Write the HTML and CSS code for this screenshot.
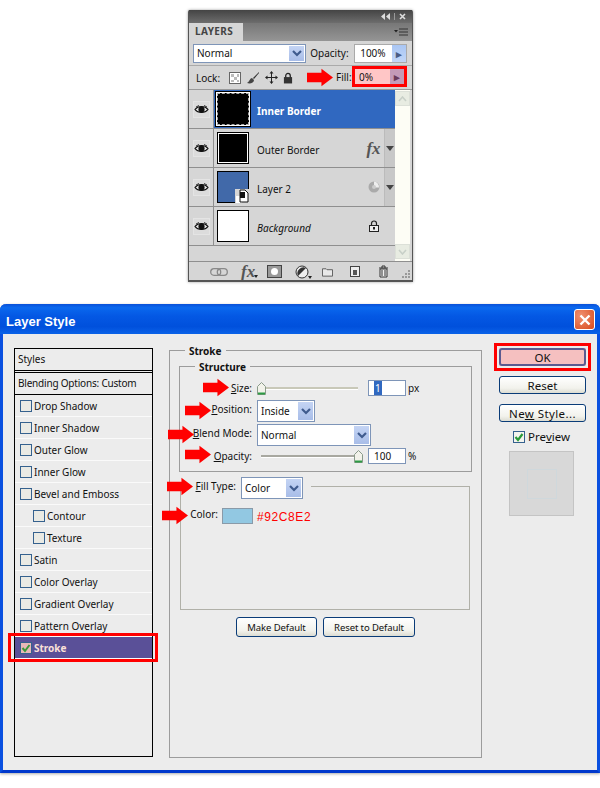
FILE: index.html
```html
<!DOCTYPE html>
<html lang="en">
<head>
<meta charset="utf-8">
<title>Layer Style</title>
<link rel="stylesheet" href="styles.css">
</head>
<body>
<svg class="defs" width="0" height="0">
  <defs>
    <symbol id="arrow" viewBox="0 0 27 18"><path d="M0 4h15V0l12 9-12 9v-4H0z" fill="#f00"/></symbol>
    <symbol id="eye" viewBox="0 0 15 15"><path d="M1 7.500C4 3.500 11 3.500 14 7.500 11 11.500 4 11.500 1 7.500z" fill="#e8e8e8" stroke="#111" stroke-width="1.200"/><circle cx="7.500" cy="7.500" r="3.100" fill="#111"/><path d="M2 5 5 3.500M13 5 10 3.500" stroke="#333"/></symbol>
    <symbol id="chev" viewBox="0 0 10 7"><path d="M1 1l4 4 4-4" fill="none" stroke="#3f5b8e" stroke-width="2.200"/></symbol>
    <symbol id="thumb" viewBox="0 0 9 13"><path d="M.5 4.500 4.500.5l4 4v8h-8z" fill="#f2f2ea" stroke="#8a9a8a"/><path d="M1 10.500h7v2H1z" fill="#2c9a44"/></symbol>
  </defs>
</svg>

<section class="panel">
  <div class="panel-top">
    <svg class="panel-collapse" width="9" height="7" viewBox="0 0 9 7"><path d="M4 0v7L0 3.500zM9 0v7L5 3.500z" fill="#ddd"/></svg>
    <span class="panel-sep"></span>
    <svg width="7" height="7" viewBox="0 0 7 7"><path d="M1 1l5 5M6 1 1 6" stroke="#ddd" stroke-width="1.600"/></svg>
  </div>
  <div class="tabs">
    <div class="tab">LAYERS</div>
    <svg class="tab-menu" width="14" height="8" viewBox="0 0 14 8"><path d="M0 2h4L2 4.500z" fill="#222"/><path d="M5 1h9M5 4h9M5 7h9" stroke="#333"/></svg>
  </div>
  <div class="opts">
    <div class="sel layer-blend"><span>Normal</span><b class="sel-btn"><svg width="10" height="7"><use href="#chev"/></svg></b></div>
    <span class="opts-label">Opacity:</span>
    <div class="stepper"><span>100%</span><b>&#9656;</b></div>
  </div>
  <div class="lockrow">
    <span class="lock-label">Lock:</span>
    <svg class="lock-ico" width="12" height="12" viewBox="0 0 12 12"><rect x=".5" y=".5" width="11" height="11" fill="#fff" stroke="#666"/><path d="M2 2h3v3H2zM5 5h3v3H5zM8 2h2v3H8zM2 8h3v2H2zM8 8h2v2H8z" fill="#bbb"/></svg>
    <svg class="lock-ico" width="14" height="14" viewBox="0 0 14 14"><path d="M13 1 7 7l1 1 5-6z" fill="#333"/><path d="M6 7c-2 0-2 3-5 5 3 1 7 0 7-3z" fill="#444"/></svg>
    <svg class="lock-ico" width="13" height="13" viewBox="0 0 13 13"><path d="M6.500 1v11M1 6.500h11" stroke="#222"/><path d="M6.500 0l2 2.500h-4zM6.500 13l2-2.500h-4zM0 6.500l2.500-2v4zM13 6.500l-2.500-2v4z" fill="#222"/></svg>
    <svg class="lock-ico" width="10" height="12" viewBox="0 0 11 12"><path d="M3 6V3.500a2.500 2.500 0 0 1 5 0V6" fill="none" stroke="#222" stroke-width="1.400"/><rect x="1" y="5" width="9" height="7" fill="#333"/></svg>
    <svg class="panel-arrow"><use href="#arrow"/></svg>
    <span class="fill-label">Fill:</span>
    <div class="stepper fill-step"><span>0%</span><b>&#9656;</b></div>
  </div>
  <div class="layers-area">
    <div class="layer-list">
      <div class="layer active">
        <div class="eye-col"><svg class="eye" width="15" height="15"><use href="#eye"/></svg></div>
        <div class="thumb thumb-dash"></div>
        <div class="lname lname-active">Inner Border</div>
      </div>
      <div class="layer">
        <div class="eye-col"><svg class="eye" width="15" height="15"><use href="#eye"/></svg></div>
        <div class="thumb thumb-black"></div>
        <div class="lname">Outer Border</div>
        <div class="lflag fx">fx</div>
        <div class="expand"><i></i></div>
      </div>
      <div class="layer">
        <div class="eye-col"><svg class="eye" width="15" height="15"><use href="#eye"/></svg></div>
        <div class="thumb thumb-blue">
          <svg class="smart" width="14" height="14" viewBox="0 0 14 14"><rect width="14" height="14" fill="#d6d6d6"/><rect x="1" y="7" width="6" height="7" fill="#fff"/><path d="M5 1h5l3 3v9H5z" fill="#fff" stroke="#111"/><rect x="5" y="3" width="5" height="6" fill="#111"/></svg>
        </div>
        <div class="lname">Layer 2</div>
        <div class="lflag"><svg width="12" height="12" viewBox="0 0 12 12"><circle cx="6" cy="6" r="5.500" fill="#aaa"/><path d="M6 .5a5.500 5.500 0 0 1 5 6H6z" fill="#eee"/><circle cx="6" cy="6" r="2" fill="#ccc"/></svg></div>
        <div class="expand"><i></i></div>
      </div>
      <div class="layer">
        <div class="eye-col"><svg class="eye" width="15" height="15"><use href="#eye"/></svg></div>
        <div class="thumb"></div>
        <div class="lname lname-bg">Background</div>
        <div class="lflag lflag-lock"><svg width="10" height="12" viewBox="0 0 10 12"><path d="M2.500 6V3.500a2.500 2.500 0 0 1 5 0V6" fill="none" stroke="#222" stroke-width="1.200"/><rect x=".5" y="5.500" width="9" height="6" fill="#eee" stroke="#222"/><rect x="4" y="7" width="2" height="2.500" fill="#222"/></svg></div>
      </div>
    </div>
    <div class="scroll">
      <div class="scroll-btn"><svg width="9" height="6" viewBox="0 0 9 6"><path d="M1 5l3.500-4L8 5" fill="none" stroke="#c8d0c8" stroke-width="1.600"/></svg></div>
      <div class="scroll-btn"><svg width="9" height="6" viewBox="0 0 9 6"><path d="M1 1l3.500 4L8 1" fill="none" stroke="#c8d0c8" stroke-width="1.600"/></svg></div>
    </div>
  </div>
  <div class="panel-foot">
    <svg class="f-link" width="18" height="8" viewBox="0 0 18 8"><rect x=".7" y=".7" width="10" height="6.600" rx="3.300" fill="none" stroke="#888" stroke-width="1.300"/><rect x="7.300" y=".7" width="10" height="6.600" rx="3.300" fill="none" stroke="#888" stroke-width="1.300"/></svg>
    <span class="foot-fx">fx<i class="mini"></i></span>
    <svg class="f-mask" width="15" height="13" viewBox="0 0 15 13"><rect x=".5" y=".5" width="14" height="12" fill="#999" stroke="#444"/><circle cx="7.500" cy="6.500" r="3.500" fill="#fff"/></svg>
    <span class="f-adj"><svg width="14" height="14" viewBox="0 0 14 14"><circle cx="7" cy="7" r="6" fill="#eee" stroke="#333"/><path d="M11 3 3 11A6 6 0 0 1 11 3z" fill="#333"/></svg><i class="mini"></i></span>
    <svg class="f-folder" width="11" height="10" viewBox="0 0 12 10"><path d="M.5 1.500h4l1 1h6v7H.5z" fill="#e8e8e8" stroke="#555"/></svg>
    <svg class="f-new" width="10" height="11" viewBox="0 0 10 11"><rect x=".5" y=".5" width="9" height="10" fill="#eee" stroke="#444"/><rect x="3" y="4" width="4" height="5" fill="#555"/></svg>
    <svg class="f-trash" width="11" height="13" viewBox="0 0 11 13"><path d="M1 3h9M4 3V1h3v2" fill="none" stroke="#333"/><path d="M2 4h7v8H2z" fill="#eee" stroke="#333"/><path d="M4 5v6M7 5v6" stroke="#333"/></svg>
    <svg class="f-grip" width="10" height="10" viewBox="0 0 10 10"><path d="M8 0h2v2H8zM5 3h2v2H5zM8 3h2v2H8zM2 6h2v2H2zM5 6h2v2H5zM8 6h2v2H8z" fill="#999"/></svg>
  </div>
</section>

<section class="dialog">
  <header class="titlebar">
    <span class="title">Layer Style</span>
    <span class="close"><svg width="12" height="12" viewBox="0 0 12 12"><path d="M1.500 1.500l9 9M10.500 1.500l-9 9" stroke="#fff" stroke-width="2.400"/></svg></span>
  </header>
  <div class="dlg-body">
    <aside class="stylelist">
      <div class="sl-head">Styles</div>
      <div class="sl-blend">Blending Options: Custom</div>
      <div class="sl-row"><i class="cb"></i>Drop Shadow</div>
      <div class="sl-row"><i class="cb"></i>Inner Shadow</div>
      <div class="sl-row"><i class="cb"></i>Outer Glow</div>
      <div class="sl-row"><i class="cb"></i>Inner Glow</div>
      <div class="sl-row"><i class="cb"></i>Bevel and Emboss</div>
      <div class="sl-row sl-sub"><i class="cb"></i>Contour</div>
      <div class="sl-row sl-sub"><i class="cb"></i>Texture</div>
      <div class="sl-row"><i class="cb"></i>Satin</div>
      <div class="sl-row"><i class="cb"></i>Color Overlay</div>
      <div class="sl-row"><i class="cb"></i>Gradient Overlay</div>
      <div class="sl-row"><i class="cb"></i>Pattern Overlay</div>
      <div class="sl-row sl-on">
        <i class="cb cb-on"><svg width="10" height="10" viewBox="0 0 10 10"><path d="M1.500 5l2.500 3 4.500-6" fill="none" stroke="#3a9a3a" stroke-width="2"/></svg></i>Stroke
        <span class="red-frame"></span>
      </div>
    </aside>

    <main class="stroke-group">
      <span class="legend legend-stroke">Stroke</span>
      <div class="structure">
        <span class="legend legend-structure">Structure</span>
        <div class="frow frow-size">
          <svg class="ar"><use href="#arrow"/></svg>
          <label class="flabel"><u>S</u>ize:</label>
          <div class="slider"><svg class="th" width="9" height="13"><use href="#thumb"/></svg><span class="track track-size"></span></div>
          <div class="numbox"><span class="sel-text">1</span></div>
          <span class="unit">px</span>
        </div>
        <div class="frow frow-pos">
          <svg class="ar"><use href="#arrow"/></svg>
          <label class="flabel flabel-up"><u>P</u>osition:</label>
          <div class="sel sel-pos"><span>Inside</span><b class="sel-btn"><svg width="10" height="7"><use href="#chev"/></svg></b></div>
        </div>
        <div class="frow frow-pos">
          <svg class="ar"><use href="#arrow"/></svg>
          <label class="flabel flabel-up"><u>B</u>lend Mode:</label>
          <div class="sel sel-blend"><span>Normal</span><b class="sel-btn"><svg width="10" height="7"><use href="#chev"/></svg></b></div>
        </div>
        <div class="frow frow-op">
          <svg class="ar"><use href="#arrow"/></svg>
          <label class="flabel"><u>O</u>pacity:</label>
          <div class="slider slider-end"><span class="track track-op"></span><svg class="th" width="9" height="13"><use href="#thumb"/></svg></div>
          <div class="numbox numbox-c">100</div>
          <span class="unit">%</span>
        </div>
      </div>
      <div class="fillrow">
        <svg class="ar"><use href="#arrow"/></svg>
        <label class="flabel flabel-fill flabel-up"><u>F</u>ill Type:</label>
        <div class="sel sel-fill"><span>Color</span><b class="sel-btn"><svg width="10" height="7"><use href="#chev"/></svg></b></div>
      </div>
      <div class="fillbox">
        <div class="colorrow">
          <svg class="ar"><use href="#arrow"/></svg>
          <label class="flabel flabel-color flabel-up">Color:</label>
          <span class="swatch"></span>
          <span class="hex">#92C8E2</span>
        </div>
      </div>
      <div class="defaults">
        <button class="btn btn-make">Make Default</button>
        <button class="btn btn-reset">Reset to Default</button>
      </div>
    </main>

    <aside class="actions">
      <span class="ok-frame"><button class="btn btn-act btn-ok">OK</button></span>
      <button class="btn btn-act">Reset</button>
      <button class="btn btn-act btn-new">Ne<u>w</u> Style...</button>
      <div class="preview-check"><i class="cb cb-prev"><svg width="10" height="10" viewBox="0 0 10 10"><path d="M1.500 5l2.500 3 4.500-6" fill="none" stroke="#2a9a3a" stroke-width="2.200"/></svg></i>Pre<u>v</u>iew</div>
      <div class="preview"><span></span></div>
    </aside>
  </div>
</section>
</body>
</html>
```
FILE: styles.css
```css
* { box-sizing: border-box; }
html, body { margin: 0; padding: 0; background: #fff; }
body {
  width: 600px;
  height: 788px;
  overflow: hidden;
  font-family: "Noto Sans", sans-serif;
  font-size: 10px;
  color: #111;
  padding-top: 10px;
}
.defs { position: absolute; }
button { font: inherit; color: inherit; }

/* Layers panel */
.panel {
  width: 225px;
  height: 272px;
  margin-left: 188px;
  border: 1px solid #555;
  border-top: 0;
  border-radius: 2px 2px 0 0;
  background: #d6d6d6;
  box-shadow: 0 0 3px #999;
  display: flex;
  flex-direction: column;
}
.panel-top {
  height: 13px;
  background: linear-gradient(#444, #6d6d6d);
  display: flex;
  align-items: center;
  justify-content: flex-end;
  gap: 3px;
  padding-right: 6px;
  flex: none;
}
.panel-sep { width: 1px; height: 7px; background: #999; margin: 0 1px; }
.tabs {
  height: 18px;
  background: linear-gradient(#777, #959595);
  display: flex;
  justify-content: space-between;
  align-items: center;
  padding-right: 4px;
  flex: none;
}
.tab {
  width: 54px;
  height: 18px;
  background: #d6d6d6;
  font-weight: bold;
  letter-spacing: .4px;
  line-height: 17px;
  color: #444;
  padding-left: 6px;
}
.opts {
  height: 25px;
  display: flex;
  align-items: center;
  padding: 0 5px 0 4px;
  border-bottom: 1px solid #aaa;
  flex: none;
}
.sel {
  background: #fff;
  border: 1px solid #7e95b8;
  display: flex;
  align-items: center;
  justify-content: space-between;
  padding-left: 3px;
  box-shadow: inset 0 0 0 1px #fff;
}
.sel-btn {
  width: 15px;
  align-self: stretch;
  margin: 1px;
  background: linear-gradient(#c4d4f4, #a8bde8);
  display: flex;
  align-items: center;
  justify-content: center;
}
.layer-blend { width: 116px; height: 19px; }
.opts-label { margin-left: 4px; width: 42px; }
.stepper {
  width: 54px;
  height: 19px;
  background: #fff;
  border: 1px solid #aaa;
  display: flex;
  align-items: center;
  justify-content: space-between;
  padding-left: 5px;
  margin-left: 3px;
}
.stepper b {
  width: 14px;
  align-self: stretch;
  background: linear-gradient(#a9c6f4, #c2d6f7);
  color: #4a5c84;
  font-size: 11px;
  text-align: center;
  line-height: 17px;
}
.lockrow {
  height: 24px;
  display: flex;
  align-items: center;
  padding: 0 5px 0 7px;
  border-bottom: 1px solid #999;
  position: relative;
  flex: none;
}
.lock-label { width: 33px; }
.lock-ico { margin-right: 5px; flex: none; }
.panel-arrow { position: absolute; left: 118px; top: 2px; width: 26px; height: 19px; }
.fill-label { position: absolute; left: 147px; top: 4px; }
.fill-step {
  position: absolute;
  left: 163px;
  top: 0;
  width: 55px;
  height: 21px;
  border: 3px solid #f00;
  background: #ffc6c6;
  margin: 0;
  padding-left: 4px;
}
.fill-step b { background: #c49ab8; line-height: 15px; color: #6a3a5a; }
.layers-area { display: flex; height: 171px; flex: none; }
.layer-list { width: 206px; }
.layer {
  height: 39px;
  display: flex;
  align-items: center;
  border-bottom: 1px solid #8f8f8f;
  position: relative;
}
.eye-col {
  width: 25px;
  height: 100%;
  border-right: 1px solid #8f8f8f;
  display: flex;
  align-items: center;
  justify-content: center;
  flex: none;
}
.eye { background: #dcdcdc; outline: 1px solid #e4e4e4; }
.thumb {
  width: 32px;
  height: 32px;
  margin-left: 3px;
  border: 1px solid #000;
  background: #fff;
  flex: none;
  position: relative;
}
.thumb-black { background: #000; box-shadow: inset 0 0 0 1px #fff; }
.thumb-dash { background: #000; border: 1px dashed #aaa; box-shadow: 0 0 0 1px #fff, 0 0 0 2px #000; }
.thumb-blue { background: #4169a9; }
.smart { position: absolute; right: -1px; bottom: -1px; }
.active { background: linear-gradient(90deg, #d6d6d6 25px, #3068c0 25px); }
.lname {
  margin: 3px 0 0 8px;
  flex: 1;
}
.lname-active { font-weight: bold; color: #fff; }
.lname-bg { font-style: italic; }
.lflag { width: 21px; text-align: center; flex: none; line-height: 0; }
.lflag-lock { margin-right: 11px; }
.fx {
  font: italic bold 17px/15px "Liberation Serif", serif;
  color: #555;
}
.expand {
  width: 11px;
  height: 100%;
  background: #c8c8c8;
  border-left: 1px solid #bbb;
  display: flex;
  align-items: center;
  justify-content: center;
  flex: none;
}
.expand i { border: 4px solid transparent; border-top: 5px solid #444; border-bottom: 0; }
.scroll {
  width: 15px;
  background: #fdfdf5;
  display: flex;
  flex-direction: column;
  justify-content: space-between;
  padding: 1px 0 2px;
}
.scroll-btn {
  height: 15px;
  background: #e8ece2;
  border: 1px solid #dce0d8;
  display: flex;
  align-items: center;
  justify-content: center;
}
.panel-foot {
  flex: 1;
  border-top: 1px solid #8f8f8f;
  display: flex;
  align-items: center;
  padding-left: 21px;
  box-shadow: inset 0 -1px 0 #555;
}
.foot-fx { font: italic bold 17px/15px "Liberation Serif", serif; color: #555; margin-left: 13px; width: 17px; position: relative; }
.mini { position: absolute; right: 0; bottom: 1px; border: 2px solid transparent; border-top: 3px solid #222; border-bottom: 0; }
.f-mask { margin-left: 9px; flex: none; }
.f-adj { margin-left: 13px; width: 17px; height: 14px; position: relative; line-height: 0; }
.f-adj .mini { right: 0; bottom: 0; }
.f-folder { margin-left: 10px; flex: none; }
.f-new { margin-left: 17px; flex: none; }
.f-trash { margin-left: 18px; flex: none; }
.f-grip { margin: 6px 0 0 11px; flex: none; }

/* Dialog */
.dialog {
  margin-top: 22px;
  width: 600px;
  height: 469px;
  background: #ececec;
  border: 3px solid #0a50e0;
  border-top: 0;
  border-bottom-color: #0038cc;
  border-radius: 6px 6px 0 0;
  box-shadow: 0 1px 3px #aaa;
  display: flex;
  flex-direction: column;
}
.titlebar {
  height: 30px;
  margin: 0 -3px;
  padding: 1px 5px 0 6px;
  background: linear-gradient(#0a50d8 0, #0a68ee 12%, #0458e4 40%, #0050dc 75%, #0a62e8 100%);
  border-radius: 6px 6px 0 0;
  display: flex;
  align-items: center;
  justify-content: space-between;
  flex: none;
}
.title { color: #fff; font: bold 13px/15px "Liberation Sans", sans-serif; margin-top: 3px; }
.close {
  width: 21px;
  height: 21px;
  border: 1px solid #fff;
  border-radius: 3px;
  background: radial-gradient(circle at 30% 30%, #f09070, #d84a1c);
  display: flex;
  align-items: center;
  justify-content: center;
}
.dlg-body {
  flex: 1;
  position: relative;
  padding: 14px 0 0 11px;
  display: flex;
  align-items: flex-start;
}

/* Style list */
.stylelist {
  width: 139px;
  height: 409px;
  border: 1px solid #000;
  flex: none;
}
.sl-head { height: 22px; line-height: 20px; padding-left: 3px; border-bottom: 1px solid #000; }
.sl-blend { height: 23px; line-height: 21px; padding-left: 3px; border-top: 1px solid #000; margin-top: 1px; border-bottom: 1px solid #000; letter-spacing: -.2px; }
.sl-row {
  height: 22px;
  display: flex;
  align-items: center;
  padding-left: 5px;
  border-bottom: 1px solid #fafafa;
  position: relative;
}
.sl-sub { padding-left: 18px; }
.cb {
  width: 12px;
  height: 12px;
  border: 1px solid #35618e;
  background: #eaeae4;
  margin-right: 2px;
  display: flex;
  align-items: center;
  justify-content: center;
  flex: none;
}
.sl-on { background: #5a5098; color: #fbe0d8; font-weight: bold; }
.cb-on { background: #e8b8b8; }
.red-frame {
  position: absolute;
  left: -7px;
  right: -6px;
  top: -4px;
  bottom: -4px;
  border: 3px solid #f00;
  pointer-events: none;
}

/* Stroke group */
.stroke-group {
  width: 313px;
  height: 408px;
  margin: 2px 0 0 16px;
  border: 1px solid #9c9c9c;
  position: relative;
  padding: 15px 9px 0;
  flex: none;
}
.legend {
  position: absolute;
  background: #ececec;
  font-weight: bold;
  padding: 0 4px;
  line-height: 12px;
}
.legend-stroke { left: 15px; top: -6px; }
.legend-structure { left: 15px; top: -6px; }
.structure {
  width: 293px;
  height: 106px;
  border: 1px solid #9c9c9c;
  position: relative;
  padding-top: 13px;
}
.frow { display: flex; align-items: center; position: relative; }
.frow-size { height: 16px; }
.frow-pos { height: 22px; margin-top: 4px; }
.frow-pos + .frow-pos { margin-top: 2px; }
.frow-op { height: 16px; margin-top: 2px; }
.flabel { width: 72px; text-align: right; flex: none; margin-right: 5px; }
.flabel-up { margin-bottom: 5px; }
.ar { width: 26px; height: 19px; flex: none; position: absolute; }
.frow-size .ar { left: 23px; top: -2px; }
.frow-pos .ar { left: 5px; top: 1px; }
.frow-pos + .frow-pos .ar { left: -12px; top: 1px; }
.frow-op .ar { left: 5px; top: -3px; }
.slider { width: 106px; display: flex; align-items: center; margin-right: 5px; flex: none; }
.slider-end { padding-left: 4px; }
.track { height: 3px; background: #c8c8b8; border-bottom: 1px solid #fff; flex: 1; }
.track-size { margin-right: 5px; }
.track-op { background: #a8a8a0; }
.th { flex: none; }
.numbox {
  width: 38px;
  height: 16px;
  background: #fff;
  border: 1px solid #7e95b8;
  padding-left: 5px;
  line-height: 14px;
}
.sel-text { background: #3068c0; color: #fff; padding: 0 1px; }
.unit { margin-left: 2px; }
.sel-pos { width: 58px; height: 22px; }
.sel-blend { width: 114px; height: 22px; }
.sel-fill { width: 62px; height: 22px; }
.fillrow { display: flex; align-items: center; position: relative; height: 22px; margin-top: 5px; z-index: 1; }
.flabel-fill { width: 57px; }
.fillrow .ar { left: -12px; top: 0; }
.fillbox {
  width: 290px;
  height: 124px;
  margin: -13px 0 0 1px;
  border: 1px solid #b0b0a8;
  border-top: 0;
  position: relative;
  background: linear-gradient(90deg, transparent 130px, #b0b0a8 130px) top left / 100% 1px no-repeat;
  padding-top: 22px;
}
.colorrow { display: flex; align-items: center; position: relative; height: 16px; }
.flabel-color { width: 37px; margin-right: 4px; }
.colorrow .ar { left: -19px; top: -2px; }
.swatch { width: 31px; height: 16px; background: #92c8e2; border: 1px solid #8a9aa8; }
.hex { color: #f00; margin: 1px 0 0 4px; font: 12px "Liberation Sans", sans-serif; letter-spacing: .6px; }
.defaults { display: flex; gap: 6px; margin: 7px 0 0 57px; }

.btn {
  height: 20px;
  border: 1px solid #0a3c78;
  border-radius: 3px;
  background: linear-gradient(#fff, #f2f2ec 70%, #dcdcd2);
  padding: 1px 0 0;
  text-align: center;
  font-size: 9.500px;
  letter-spacing: -.1px;
}
.btn-make { width: 81px; }
.btn-reset { width: 92px; }

/* Actions */
.actions {
  width: 87px;
  margin-left: 17px;
  display: flex;
  flex-direction: column;
  align-items: center;
  gap: 10px;
  flex: none;
}
.btn-act { width: 87px; height: 18px; font-size: 11.500px; line-height: 15px; padding: 0; letter-spacing: 0; }
.btn-new { letter-spacing: .4px; }
.ok-frame {
  display: block;
  outline: 3px solid #f00;
  outline-offset: 2px;
  background: #f8c4c4;
  line-height: 0;
}
.btn-ok { background: #f5c0c0; border: 2px solid #5a5a90; }
.preview-check { display: flex; align-items: center; height: 12px; line-height: 12px; font-size: 11.500px; margin: -1px 0 0 -2px; }
.cb-prev { background: #f4f4ee; margin-right: 3px; }
.preview {
  width: 65px;
  height: 65px;
  background: #d8d8d8;
  border: 1px solid #c4c4c4;
  display: flex;
  align-items: center;
  justify-content: center;
  margin: -2px 0 0 -2px;
}
.preview span { width: 30px; height: 30px; border: 1px solid #cfd8dc; }
```
